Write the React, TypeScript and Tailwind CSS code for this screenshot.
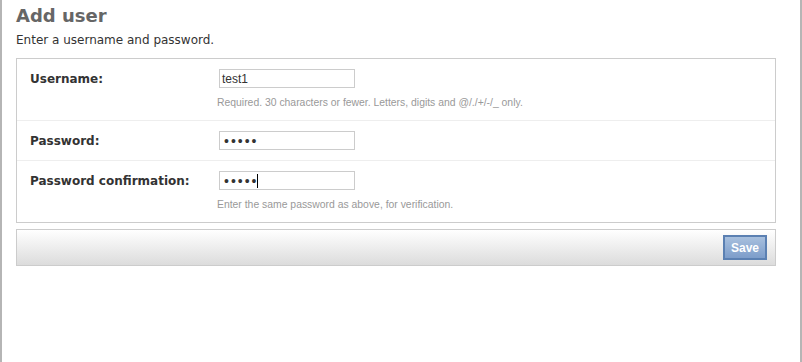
import React from 'react';

interface FieldRowProps {
  label: string;
  value: React.ReactNode;
  help?: string;
  first?: boolean;
}

const FieldRow: React.FC<FieldRowProps> = ({ label, value, help, first = false }) => {
  return (
    <div className={`flex items-start pl-[13px] pt-[10px] pb-[10px] ${first ? '' : 'border-t border-[#eee]'}`}>
      <label className="w-[189px] h-[19px] flex items-center text-[12px] font-bold text-[#333]">{label}</label>
      <div>
        <div className="w-[136px] h-[19px] border border-[#ccc] bg-white flex items-center pl-[2px] text-[12px] text-[#333] font-['Liberation_Sans',Arial,sans-serif]">
          {value}
        </div>
        {help && (
          <p className="-ml-[2px] mt-[8px] text-[10.4px] leading-[14px] text-[#999] font-['Liberation_Sans',Arial,sans-serif] whitespace-nowrap">
            {help}
          </p>
        )}
      </div>
    </div>
  );
};

const Dots: React.FC<{ caret?: boolean }> = ({ caret = false }) => (
  <span className="flex items-center pl-[2px]">
    <span className="text-[14px] leading-none tracking-[2px] text-[#333]">•••••</span>
    {caret && <span className="-ml-[2px] w-px h-[14px] bg-black" />}
  </span>
);

export default function App() {
  return (
    <div className="h-[362px] w-[802px] overflow-hidden border-x-2 border-[#b5b5b5] bg-white font-['DejaVu_Sans',sans-serif]">
      <div className="pl-[14px] pr-[24px] pt-[5px]">
        <h1 className="text-[18px] leading-[21px] font-bold text-[#666]">Add user</h1>
        <p className="mt-[7px] text-[12px] leading-[14px] text-[#333]">Enter a username and password.</p>

        <fieldset className="mt-[11px] border border-[#ccc]">
          <FieldRow
            first
            label="Username:"
            value="test1"
            help="Required. 30 characters or fewer. Letters, digits and @/./+/-/_ only."
          />
          <FieldRow label="Password:" value={<Dots />} />
          <FieldRow
            label="Password confirmation:"
            value={<Dots caret />}
            help="Enter the same password as above, for verification."
          />
        </fieldset>

        <div className="mt-[6px] flex justify-end border border-[#ccc] bg-gradient-to-b from-white to-[#dcdcdc] py-[5px] pr-[8px]">
          <button className="w-[44px] h-[25px] border-2 border-[#5b80b2] bg-gradient-to-b from-[#a8c0de] to-[#7d9dca] text-[12px] font-bold text-white font-['Liberation_Sans',Arial,sans-serif]">
            Save
          </button>
        </div>
      </div>
    </div>
  );
}
